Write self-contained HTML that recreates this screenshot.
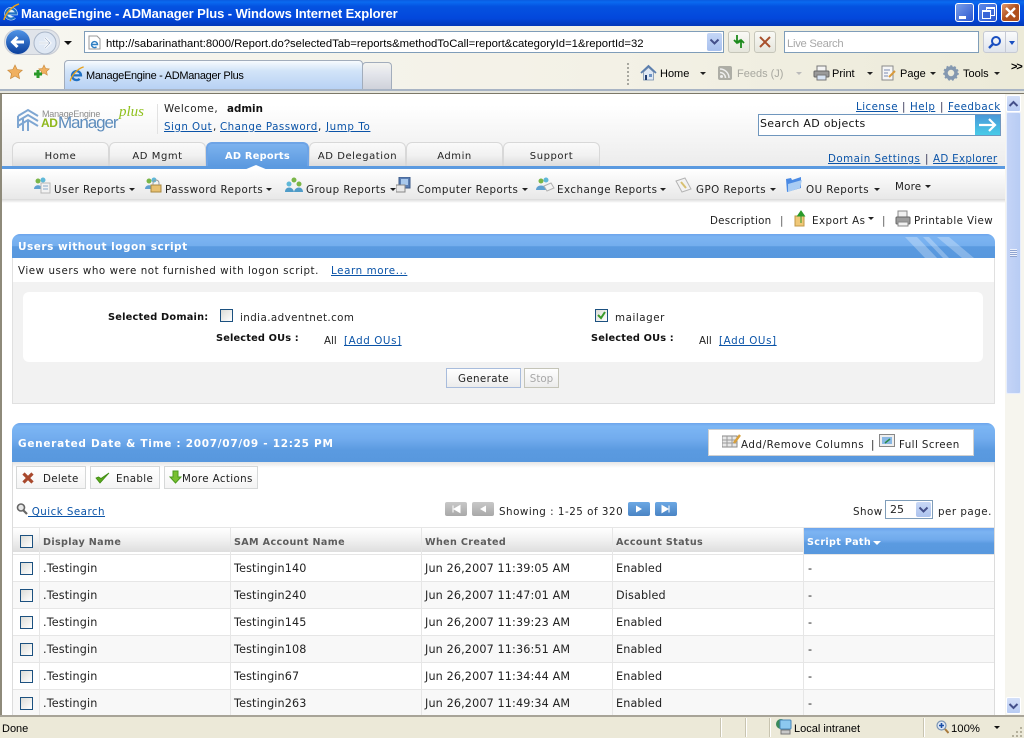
<!DOCTYPE html>
<html><head><meta charset="utf-8"><title>ManageEngine - ADManager Plus</title>
<style>
html,body{margin:0;padding:0}
body{width:1024px;height:738px;overflow:hidden;position:relative;background:#fff;font-family:"DejaVu Sans","Liberation Sans",sans-serif;font-size:10px;color:#222}
.a,.t,svg.i{position:absolute}
.t{white-space:nowrap;line-height:14px;margin-top:1px;letter-spacing:.46px}
.c{font-family:"Liberation Sans",sans-serif;font-size:12px;color:#000;letter-spacing:0}
a,.l{color:#0b54a8;text-decoration:underline}
.tab{position:absolute;top:142px;height:24px;box-sizing:border-box;border:1px solid #d8d8d8;border-bottom:0;border-radius:6px 6px 0 0;background:linear-gradient(#fafafa,#f1f1f1 55%,#dcdcdc);text-align:center;line-height:27px;color:#222;font-size:10px;letter-spacing:.55px}
.cb{position:absolute;width:11px;height:11px;border:1px solid #1c5180;background:linear-gradient(135deg,#dcdcd7,#fff)}
.btn{position:absolute;box-sizing:border-box;height:23px;border:1px solid #d6d8d8;background:linear-gradient(#fff,#f4f4f4)}
.row{position:absolute;left:13px;width:981px;height:26px;border-bottom:1px solid #e6e6e6}
.v{position:absolute;top:528px;width:1px;height:187px;background:#e6e6e6}
.cell{position:absolute;white-space:nowrap;font-size:11.2px;line-height:14px;color:#222;margin-top:1px;letter-spacing:.14px}
.th{position:absolute;top:535px;white-space:nowrap;font-weight:bold;color:#5c5c5c;font-size:9.6px;line-height:14px;margin-top:1px;letter-spacing:.36px}
.arr{position:absolute;width:0;height:0;border-left:3px solid transparent;border-right:3px solid transparent;border-top:3px solid #222}
.pg{position:absolute;top:502px;width:22px;height:14px;border-radius:2px}
</style></head><body>

<!-- title bar -->
<div class="a" style="left:0;top:0;width:1024px;height:26px;background:linear-gradient(#0a5ce0 0,#0a6af0 8%,#0452e0 25%,#0348dc 70%,#0338b8 100%)"></div>
<svg class="i" style="left:2px;top:3px" width="18" height="19" viewBox="0 0 18 19"><path d="M5 10.500h9a5 5 0 1 0-1.500 3.800" fill="#e4f0fa" stroke="#cfe6f8" stroke-width="3.400"/><path d="M5 10.500h9a5 5 0 1 0-1.500 3.800" fill="none" stroke="#1f70c4" stroke-width="2.200"/><path d="M2 17C3 11 10 3 17 1" fill="none" stroke="#e8a21c" stroke-width="1.500"/></svg>
<div class="t" style="left:21px;top:6px;font-family:'Liberation Sans',sans-serif;font-weight:bold;font-size:13px;color:#fff;letter-spacing:-.1px">ManageEngine - ADManager Plus - Windows Internet Explorer</div>
<div class="a" style="left:955px;top:3px;width:19px;height:19px;box-sizing:border-box;border:1px solid #fff;border-radius:3px;background:linear-gradient(135deg,#7a9ee8,#2a56d0)"><div class="a" style="left:3px;top:12px;width:7px;height:3px;background:#fff"></div></div>
<div class="a" style="left:978px;top:3px;width:19px;height:19px;box-sizing:border-box;border:1px solid #fff;border-radius:3px;background:linear-gradient(135deg,#5f8ae8,#2a56d0)"><div class="a" style="left:7px;top:3px;width:7px;height:6px;border:1px solid #fff;border-top-width:2px"></div><div class="a" style="left:3px;top:6px;width:7px;height:6px;border:1px solid #fff;border-top-width:2px;background:#3a66d8"></div></div>
<div class="a" style="left:1001px;top:3px;width:19px;height:19px;box-sizing:border-box;border:1px solid #fff;border-radius:3px;background:linear-gradient(135deg,#e09a70,#b0501c 50%)"><svg class="i" style="left:2px;top:2px" width="13" height="13"><path d="M2 2l9 9M11 2l-9 9" stroke="#fff" stroke-width="2.400"/></svg></div>

<!-- chrome -->
<div class="a" style="left:0;top:26px;width:1024px;height:66px;background:linear-gradient(90deg,#f7f6f0,#f3f1e6 60%,#ecead8)"></div>
<div class="a" style="left:4px;top:29px;width:56px;height:26px;border-radius:13px;background:#e0e4ea;border:1px solid #c8ccd4;box-sizing:border-box"></div>
<svg class="i" style="left:5px;top:29px" width="26" height="26" viewBox="0 0 26 26"><defs><linearGradient id="b1" x1="0" y1="0" x2="0" y2="1"><stop offset="0" stop-color="#4f93e6"/><stop offset="1" stop-color="#0b3f9c"/></linearGradient></defs><circle cx="13" cy="13" r="12" fill="url(#b1)"/><path d="M19 13H8M12.500 8L7.500 13l5 5" stroke="#fff" stroke-width="3" fill="none"/></svg>
<svg class="i" style="left:33px;top:31px" width="24" height="24" viewBox="0 0 24 24"><circle cx="12" cy="12" r="11" fill="#dfe8f4" stroke="#a9b6c8"/><path d="M6 12h11M12 7l5 5-5 5" stroke="#fff" stroke-width="2.600" fill="none"/><path d="M6 12h11M12 7l5 5-5 5" stroke="#98aac4" stroke-width=".6" fill="none"/></svg>
<div class="arr" style="left:64px;top:41px;border-left-width:4px;border-right-width:4px;border-top:4px solid #111"></div>
<div class="a" style="left:84px;top:31px;width:640px;height:22px;box-sizing:border-box;border:1px solid #7f9db9;background:#fff"></div>
<svg class="i" style="left:87px;top:35px" width="15" height="15" viewBox="0 0 15 15"><path d="M2 1h8l3 3v10H2z" fill="#fff" stroke="#999"/><path d="M5 9.500h5.500a3 3 0 1 0-1 2.300" fill="none" stroke="#2f7fc4" stroke-width="1.400"/></svg>
<div class="t c" style="left:106px;top:36px;font-size:11.3px;letter-spacing:0">http://sabarinathant:8000/Report.do?selectedTab=reports&amp;methodToCall=report&amp;categoryId=1&amp;reportId=32</div>
<div class="a" style="left:707px;top:33px;width:15px;height:18px;background:linear-gradient(#c4d6f6,#a8c0ee);border-radius:2px"></div>
<svg class="i" style="left:709px;top:38px" width="11" height="8"><path d="M1.500 1.500L5.500 5.500 9.500 1.500" stroke="#44508a" stroke-width="2" fill="none"/></svg>
<div class="a" style="left:728px;top:31px;width:22px;height:22px;box-sizing:border-box;border:1px solid #c6c6ba;border-radius:3px;background:linear-gradient(#fafaf6,#e6e6dc)"></div>
<svg class="i" style="left:731px;top:34px" width="16" height="16"><path d="M6 1v8M3 6l3 3 3-3" stroke="#1c8a1c" stroke-width="1.800" fill="none"/><path d="M10 14V7M7 9l3-3 3 3" stroke="#1c8a1c" stroke-width="1.800" fill="none"/></svg>
<div class="a" style="left:754px;top:31px;width:22px;height:22px;box-sizing:border-box;border:1px solid #c6c6ba;border-radius:3px;background:linear-gradient(#fafaf6,#e6e6dc)"></div>
<svg class="i" style="left:759px;top:36px" width="12" height="12"><path d="M1 1l10 10M11 1L1 11" stroke="#a8502c" stroke-width="2"/></svg>
<div class="a" style="left:784px;top:31px;width:195px;height:22px;box-sizing:border-box;border:1px solid #7f9db9;background:#fff"></div>
<div class="t c" style="left:787px;top:36px;font-size:11.3px;color:#a8a8a8;letter-spacing:-.3px">Live Search</div>
<div class="a" style="left:983px;top:31px;width:35px;height:22px;box-sizing:border-box;border:1px solid #c6cad4;border-radius:3px;background:linear-gradient(#fafbfc,#dfe4ec)"></div>
<div class="a" style="left:1005px;top:32px;width:1px;height:20px;background:#c6cad4"></div>
<svg class="i" style="left:987px;top:35px" width="15" height="15"><circle cx="9" cy="6" r="4" fill="none" stroke="#1a4fc0" stroke-width="2"/><path d="M6 9l-4 4" stroke="#1a4fc0" stroke-width="2.400"/></svg>
<div class="arr" style="left:1009px;top:41px;border-left-width:3px;border-right-width:3px;border-top:4px solid #1a4fc0"></div>

<svg class="i" style="left:7px;top:64px" width="16" height="16" viewBox="0 0 16 16"><path d="M8 1l2.200 4.600 5 .6-3.700 3.400 1 5L8 12l-4.500 2.600 1-5L.8 6.200l5-.6z" fill="#f0b060" stroke="#c98a3c" stroke-width=".7"/></svg>
<svg class="i" style="left:33px;top:64px" width="17" height="16" viewBox="0 0 17 16"><path d="M11 1l1.600 3.400 3.700.5-2.700 2.500.7 3.700L11 9l-3.300 1.900.7-3.700L5.700 4.900l3.700-.5z" fill="#f0b060" stroke="#c98a3c" stroke-width=".6"/><path d="M5 6v8M1 10h8" stroke="#2a9a2a" stroke-width="3"/></svg>
<div class="a" style="left:64px;top:60px;width:299px;height:29px;box-sizing:border-box;border:1px solid #a2adbc;border-bottom:0;border-radius:4px 4px 0 0;background:linear-gradient(#f8fbfe,#d2e4f8 35%,#b8d2f4)"></div>
<svg class="i" style="left:68px;top:66px" width="17" height="17" viewBox="0 0 18 19"><path d="M5 10.500h9a5 5 0 1 0-1.500 3.800" fill="none" stroke="#1f70c4" stroke-width="2.600"/><path d="M2 17C3 11 10 3 17 1" fill="none" stroke="#e8a21c" stroke-width="1.500"/></svg>
<div class="t c" style="left:86px;top:68px;font-size:11px;letter-spacing:-.3px">ManageEngine - ADManager Plus</div>
<div class="a" style="left:362px;top:62px;width:30px;height:27px;box-sizing:border-box;border:1px solid #a2adbc;border-bottom:0;border-radius:4px 4px 0 0;background:linear-gradient(#f4f4f0,#e4e6ec 40%,#cfd2da)"></div>
<div class="a" style="left:627px;top:63px;width:2px;height:22px;background:repeating-linear-gradient(#a8a8a0 0 2px,transparent 2px 4px)"></div>
<svg class="i" style="left:640px;top:64px" width="17" height="17" viewBox="0 0 17 17"><path d="M1 9l7.500-7L16 9" fill="none" stroke="#5a7eae" stroke-width="1.800"/><path d="M3.500 8v8h10V8l-5-4.500z" fill="#dfe8f4" stroke="#6c86a8" stroke-width=".7"/><path d="M5 11h2v5H5z" fill="#203c70"/><path d="M9 10h3v3H9z" fill="#6d93c4"/></svg>
<div class="t c" style="left:660px;top:66px;font-size:11px">Home</div>
<div class="arr" style="left:700px;top:72px"></div>
<svg class="i" style="left:718px;top:66px" width="14" height="14"><rect width="14" height="14" rx="2" fill="#aeaea6"/><circle cx="3.500" cy="10.500" r="1.500" fill="#eee"/><path d="M2 6.500a5.500 5.500 0 0 1 5.500 5.500M2 3a9 9 0 0 1 9 9" stroke="#eee" stroke-width="1.500" fill="none"/></svg>
<div class="t c" style="left:737px;top:66px;font-size:11px;color:#a8a8a0">Feeds (J)</div>
<div class="arr" style="left:796px;top:72px;border-top-color:#bbb"></div>
<svg class="i" style="left:813px;top:65px" width="17" height="16"><rect x="4" y="1" width="9" height="6" fill="#f4f4f4" stroke="#777"/><rect x="1" y="6" width="15" height="6" rx="1" fill="#9a9a9a" stroke="#666"/><rect x="4" y="10" width="9" height="5" fill="#d8e4f4" stroke="#777"/></svg>
<div class="t c" style="left:832px;top:66px;font-size:11px">Print</div>
<div class="arr" style="left:867px;top:72px"></div>
<svg class="i" style="left:881px;top:65px" width="16" height="16"><rect x="1" y="1" width="11" height="14" fill="#f6f6f6" stroke="#8a8a8a"/><path d="M3 5h6M3 8h4M3 11h4" stroke="#7a8ab0"/><path d="M8 12l6-6" stroke="#d89a3c" stroke-width="2"/></svg>
<div class="t c" style="left:900px;top:66px;font-size:11px">Page</div>
<div class="arr" style="left:930px;top:72px"></div>
<svg class="i" style="left:943px;top:65px" width="16" height="16"><circle cx="8" cy="8" r="5" fill="none" stroke="#8498b0" stroke-width="3.500"/><circle cx="8" cy="8" r="7" fill="none" stroke="#8498b0" stroke-width="1.600" stroke-dasharray="2 2"/></svg>
<div class="t c" style="left:963px;top:66px;font-size:11px">Tools</div>
<div class="arr" style="left:994px;top:72px"></div>
<div class="t c" style="left:1011px;top:59px;font-size:11px;font-weight:bold;letter-spacing:-1px">&gt;&gt;</div>
<div class="a" style="left:0;top:89px;width:1024px;height:2px;background:#a8b4c4"></div>
<div class="a" style="left:0;top:91px;width:1024px;height:2px;background:#e6e6de"></div>
<div class="a" style="left:0;top:93px;width:1024px;height:1px;background:#7c7868"></div>

<!-- page background -->
<div class="a" style="left:0;top:94px;width:2px;height:622px;background:#8e8a7a"></div>
<div class="a" style="left:2px;top:94px;width:1003px;height:75px;background:linear-gradient(#fff 0,#fff 15%,#ebebeb 100%)"></div>

<!-- logo -->
<svg class="i" style="left:16px;top:108px" width="24" height="25" viewBox="0 0 24 25"><g fill="none" stroke="#7ea6d2" stroke-width="2"><path d="M2 8l10-6 10 6M2 13l10-6 10 6M2 18l10-6 10 6"/><path d="M2 8v12M7 10v13M12 12v11"/></g></svg>
<div class="t" style="left:42px;top:106px;font-family:'Liberation Sans',sans-serif;font-size:9px;color:#8c8c8c;letter-spacing:-.2px">ManageEngine</div>
<div class="t" style="left:41px;top:115px;font-family:'Liberation Sans',sans-serif;font-weight:bold;font-size:12px;color:#8fb81c;letter-spacing:-.4px">AD</div>
<div class="t" style="left:58px;top:115px;font-family:'Liberation Sans',sans-serif;font-size:17px;color:#5d8cbc;letter-spacing:-1.100px">Manager</div>
<div class="t" style="left:119px;top:104px;font-family:'Liberation Serif',serif;font-style:italic;font-size:15px;color:#8fc01c;letter-spacing:0">plus</div>
<div class="a" style="left:157px;top:104px;width:1px;height:30px;background:#e2e2e2"></div>

<div class="t" style="left:164px;top:101px;font-size:10.3px;color:#222">Welcome,</div>
<div class="t" style="left:227px;top:101px;font-size:10.3px;font-weight:bold;color:#111;letter-spacing:0">admin</div>
<div class="t l" style="left:164px;top:119px;font-size:10.3px">Sign Out</div><div class="t" style="left:213px;top:119px;font-size:10.3px">,</div>
<div class="t l" style="left:220px;top:119px;font-size:10.3px">Change Password</div><div class="t" style="left:318px;top:119px;font-size:10.3px">,</div>
<div class="t l" style="left:326px;top:119px;font-size:10.3px;letter-spacing:.6px">Jump To</div>

<div class="t l" style="left:856px;top:99px;font-size:10.3px">License</div>
<div class="t" style="left:902px;top:99px;font-size:10.3px;color:#335">|</div>
<div class="t l" style="left:910px;top:99px;font-size:10.3px">Help</div>
<div class="t" style="left:940px;top:99px;font-size:10.3px;color:#335">|</div>
<div class="t l" style="left:948px;top:99px;font-size:10.3px">Feedback</div>

<div class="a" style="left:758px;top:114px;width:243px;height:22px;box-sizing:border-box;border:1px solid #6f96bd;background:#fff"></div>
<div class="t" style="left:760px;top:116px;font-size:11px;color:#111;letter-spacing:.3px">Search AD objects</div>
<div class="a" style="left:975px;top:115px;width:25px;height:20px;background:linear-gradient(#4a98d8,#48cce8)"></div>
<svg class="i" style="left:978px;top:117px" width="20" height="16"><path d="M1 8h16M11 2l6 6-6 6" stroke="#fff" stroke-width="2.200" fill="none"/></svg>

<!-- tabs -->
<div class="tab" style="left:12px;width:97px">Home</div>
<div class="tab" style="left:109px;width:97px">AD Mgmt</div>
<div class="tab" style="left:206px;width:103px;background:linear-gradient(#7cb2ee,#5c9ae0);border:2px solid #6ea4e6;border-bottom:0;color:#fff;font-weight:bold;line-height:25px;font-size:9.8px;letter-spacing:.25px">AD Reports</div>
<div class="tab" style="left:309px;width:97px">AD Delegation</div>
<div class="tab" style="left:406px;width:97px">Admin</div>
<div class="tab" style="left:503px;width:97px">Support</div>
<div class="t l" style="left:828px;top:151px;font-size:10.3px">Domain Settings</div>
<div class="t" style="left:925px;top:151px;font-size:10.3px;color:#335">|</div>
<div class="t l" style="left:933px;top:151px;font-size:10.3px;letter-spacing:.3px">AD Explorer</div>
<div class="a" style="left:2px;top:166px;width:1003px;height:3px;background:#5b9ae0"></div>

<!-- subnav -->
<div class="a" style="left:2px;top:169px;width:1003px;height:30px;background:linear-gradient(#fff,#f6f6f6 40%,#e8e8e8)"></div>
<div class="a" style="left:2px;top:199px;width:1003px;height:4px;background:linear-gradient(#d8d8d8,#fff)"></div>
<div class="a" style="left:244px;top:165px;width:0;height:0;border-left:12px solid transparent;border-right:12px solid transparent;border-bottom:5px solid #fff"></div>

<svg class="i" style="left:33px;top:177px" width="18" height="17"><circle cx="5" cy="4" r="2.500" fill="#7ab648"/><path d="M1 12c0-5 8-5 8 0z" fill="#5fa0d0"/><circle cx="10" cy="3" r="2.500" fill="#5fb8d8"/><rect x="8" y="6" width="9" height="10" fill="#f2f2f2" stroke="#b8b8b8"/><path d="M10 9h5M10 12h5" stroke="#8aa8c8"/></svg>
<div class="t" style="left:54px;top:182px;font-size:10.3px">User Reports</div><div class="arr" style="left:129px;top:188px"></div>
<svg class="i" style="left:144px;top:177px" width="18" height="17"><circle cx="5" cy="4" r="2.500" fill="#7ab648"/><path d="M1 12c0-5 8-5 8 0z" fill="#5fa0d0"/><circle cx="10" cy="3" r="2.500" fill="#5fb8d8"/><rect x="7" y="8" width="10" height="7" fill="#e8c070" stroke="#a88840"/><path d="M9 8V6a3 3 0 0 1 6 0v2" stroke="#999" fill="none"/></svg>
<div class="t" style="left:165px;top:182px;font-size:10.3px">Password Reports</div><div class="arr" style="left:266px;top:188px"></div>
<svg class="i" style="left:285px;top:177px" width="18" height="17"><circle cx="9" cy="3" r="2.500" fill="#7ab648"/><circle cx="4" cy="7" r="2.500" fill="#5fb8d8"/><circle cx="14" cy="7" r="2.500" fill="#7ab648"/><path d="M0 15c0-6 8-6 9 0 1-6 9-6 9 0z" fill="#4f9cc8"/></svg>
<div class="t" style="left:306px;top:182px;font-size:10.3px">Group Reports</div><div class="arr" style="left:390px;top:188px"></div>
<svg class="i" style="left:396px;top:177px" width="16" height="16"><rect x="3" y="0" width="11" height="11" fill="#5a7eb4" stroke="#3c5a88"/><rect x="5" y="2" width="7" height="6" fill="#a8c8ec"/><rect x="0" y="8" width="9" height="7" fill="#e8e8e8" stroke="#888"/></svg>
<div class="t" style="left:417px;top:182px;font-size:10.3px">Computer Reports</div><div class="arr" style="left:522px;top:188px"></div>
<svg class="i" style="left:535px;top:177px" width="20" height="17"><circle cx="6" cy="4" r="2.500" fill="#7ab648"/><path d="M1 13c0-6 10-6 10 0z" fill="#5fa0d0"/><circle cx="11" cy="3" r="2.500" fill="#5fb8d8"/><path d="M9 9l7-3 3 5-7 3z" fill="#f4f4f4" stroke="#b0b0b0"/></svg>
<div class="t" style="left:557px;top:182px;font-size:10.3px">Exchange Reports</div><div class="arr" style="left:660px;top:188px"></div>
<svg class="i" style="left:675px;top:177px" width="19" height="17"><path d="M1 4l9-3 6 11-9 3z" fill="#f2f2f2" stroke="#b4b4b4"/><path d="M6 5l5 6" stroke="#d8c070" stroke-width="2"/></svg>
<div class="t" style="left:696px;top:182px;font-size:10.3px">GPO Reports</div><div class="arr" style="left:770px;top:188px"></div>
<svg class="i" style="left:785px;top:176px" width="18" height="17"><path d="M1 3l5-1 1 2 9-3v11L2 16z" fill="#4a8ae4"/><path d="M3 8l14-4-2 8-12 4z" fill="#a8ccf4"/></svg>
<div class="t" style="left:806px;top:182px;font-size:10.3px">OU Reports</div><div class="arr" style="left:874px;top:188px"></div>
<div class="t" style="left:895px;top:179px;font-size:10.3px;letter-spacing:.2px">More</div><div class="arr" style="left:925px;top:185px"></div>

<!-- description row -->
<div class="t" style="left:710px;top:213px;font-size:10.3px;letter-spacing:.25px">Description</div>
<div class="t" style="left:780px;top:213px;font-size:10.3px;color:#555">|</div>
<svg class="i" style="left:793px;top:210px" width="16" height="17"><path d="M2 6h9v10H2z" fill="#f0c878" stroke="#c09848"/><path d="M8 13V4M4.500 6L8 1l3.500 5z" fill="#2a9a2a" stroke="#2a9a2a"/></svg>
<div class="t" style="left:812px;top:213px;font-size:10.3px;letter-spacing:.45px">Export As</div><div class="arr" style="left:868px;top:217px"></div>
<div class="t" style="left:882px;top:213px;font-size:10.3px;color:#555">|</div>
<svg class="i" style="left:895px;top:210px" width="16" height="17"><rect x="3" y="1" width="9" height="6" fill="#f0f0f0" stroke="#888"/><rect x="1" y="7" width="14" height="7" rx="1" fill="#9c9c9c" stroke="#666"/><rect x="3" y="12" width="10" height="4" fill="#f0f0f0" stroke="#888"/></svg>
<div class="t" style="left:914px;top:213px;font-size:10.3px;letter-spacing:.4px">Printable View</div>

<!-- panel 1 -->
<div class="a" style="left:12px;top:234px;width:983px;height:24px;border-radius:8px 8px 0 0;background:linear-gradient(#6ca4ec 0,#7cb4f2 12%,#74aeee 50%,#5a9ae0 52%,#5898de 100%)"></div>
<svg class="i" style="left:905px;top:237px" width="75" height="21"><path d="M0 0h12l20 21H20zM18 0h6l20 21h-6zM32 0h12l25 21H57z" fill="#fff" opacity=".28"/></svg>
<div class="t" style="left:18px;top:239px;font-size:10.5px;font-weight:bold;color:#fff;letter-spacing:.5px">Users without logon script</div>
<div class="a" style="left:12px;top:258px;width:981px;height:145px;border:1px solid #e0e0e0;border-top:0;background:#f2f2f2"></div>
<div class="a" style="left:13px;top:258px;width:981px;height:24px;background:#fff"></div>
<div class="t" style="left:18px;top:263px;font-size:10.3px;color:#222;letter-spacing:.55px">View users who were not furnished with logon script.</div>
<div class="t l" style="left:331px;top:263px;font-size:10.3px;letter-spacing:.6px">Learn more...</div>
<div class="a" style="left:23px;top:292px;width:960px;height:70px;border-radius:6px;background:#fff"></div>
<div class="t" style="left:108px;top:310px;font-size:9.8px;font-weight:bold;color:#111;letter-spacing:.2px">Selected Domain:</div>
<div class="cb" style="left:220px;top:309px"></div>
<div class="t" style="left:240px;top:310px;font-size:10.3px;color:#222;letter-spacing:.42px">india.adventnet.com</div>
<div class="cb" style="left:595px;top:309px"></div>
<svg class="i" style="left:596px;top:310px" width="11" height="11"><path d="M2 5l3 3 4-6" stroke="#3a9a2a" stroke-width="2" fill="none"/></svg>
<div class="t" style="left:615px;top:310px;font-size:10.3px;color:#222;letter-spacing:.55px">mailager</div>
<div class="t" style="left:216px;top:331px;font-size:9.8px;font-weight:bold;color:#111;letter-spacing:.15px">Selected OUs :</div>
<div class="t" style="left:324px;top:333px;font-size:10.3px;color:#222;letter-spacing:0">All</div>
<div class="t l" style="left:344px;top:333px;font-size:10.3px;letter-spacing:.6px">[Add OUs]</div>
<div class="t" style="left:591px;top:331px;font-size:9.8px;font-weight:bold;color:#111;letter-spacing:.15px">Selected OUs :</div>
<div class="t" style="left:699px;top:333px;font-size:10.3px;color:#222;letter-spacing:0">All</div>
<div class="t l" style="left:719px;top:333px;font-size:10.3px;letter-spacing:.6px">[Add OUs]</div>
<div class="a" style="left:446px;top:368px;width:75px;height:20px;box-sizing:border-box;border:1px solid #a8bcdc;background:linear-gradient(#fff,#ececec);text-align:center;line-height:21px;font-size:10.3px;color:#222;letter-spacing:.35px">Generate</div>
<div class="a" style="left:524px;top:368px;width:35px;height:20px;box-sizing:border-box;border:1px solid #c4c4b8;background:linear-gradient(#fff,#ececec);text-align:center;line-height:21px;font-size:10.3px;color:#a8a8a8">Stop</div>

<!-- panel 2 -->
<div class="a" style="left:12px;top:423px;width:983px;height:39px;border-radius:8px 8px 0 0;background:linear-gradient(#6ca4ec 0,#7cb6f4 8%,#72acee 40%,#5a9ae0 70%,#5898de 100%)"></div>
<div class="t" style="left:18px;top:436px;font-size:10.5px;font-weight:bold;color:#fff;letter-spacing:.71px">Generated Date &amp; Time : 2007/07/09 - 12:25 PM</div>
<div class="a" style="left:708px;top:429px;width:266px;height:27px;box-sizing:border-box;border:1px solid #d0d0d0;background:#fff"></div>
<svg class="i" style="left:722px;top:434px" width="20" height="15"><rect x="0" y="2" width="15" height="11" fill="#e8e8e8" stroke="#8a8a8a"/><path d="M5 2v11M10 2v11M0 6h15M0 9h15" stroke="#9a9a9a"/><path d="M12 9l6-8" stroke="#d8a03c" stroke-width="2.400"/></svg>
<div class="t" style="left:741px;top:437px;font-size:10.3px;color:#222;letter-spacing:.55px">Add/Remove Columns</div>
<div class="t" style="left:871px;top:437px;font-size:10.3px;color:#222">|</div>
<svg class="i" style="left:879px;top:434px" width="16" height="14"><rect x=".5" y=".5" width="15" height="12" fill="#eee" stroke="#888"/><rect x="3" y="3" width="10" height="7" fill="#8ab8e4"/><path d="M6 9l5-4" stroke="#2a8a4a" stroke-width="1.500"/></svg>
<div class="t" style="left:899px;top:437px;font-size:10.3px;color:#222;letter-spacing:.4px">Full Screen</div>

<div class="a" style="left:12px;top:462px;width:1px;height:253px;background:#dcdcdc"></div>
<div class="a" style="left:994px;top:462px;width:1px;height:253px;background:#dcdcdc"></div>
<div class="a" style="left:13px;top:462px;width:981px;height:6px;background:linear-gradient(#e6e6e6,#fff)"></div>

<div class="btn" style="left:16px;top:466px;width:70px"></div>
<svg class="i" style="left:22px;top:472px" width="12" height="12"><path d="M1.500 1.500l9 9M10.500 1.500l-9 9" stroke="#a8482c" stroke-width="3.200"/></svg>
<div class="t" style="left:43px;top:471px;font-size:10.3px;color:#222;letter-spacing:.3px">Delete</div>
<div class="btn" style="left:90px;top:466px;width:70px"></div>
<svg class="i" style="left:95px;top:472px" width="15" height="12"><path d="M1 6l4 5 9-10-8 5.500L3.500 5z" fill="#5aa81c" stroke="#3c8a10" stroke-width=".8"/></svg>
<div class="t" style="left:116px;top:471px;font-size:10.3px;color:#222;letter-spacing:.35px">Enable</div>
<div class="btn" style="left:164px;top:466px;width:94px"></div>
<svg class="i" style="left:169px;top:470px" width="13" height="14"><path d="M4 1h5v6h3l-5.500 6L1 7h3z" fill="#78c030" stroke="#4a9a1c"/></svg>
<div class="t" style="left:182px;top:471px;font-size:10.3px;color:#222;letter-spacing:.36px">More Actions</div>

<svg class="i" style="left:16px;top:503px" width="12" height="12"><circle cx="5" cy="4.500" r="3.500" fill="#e8e8e8" stroke="#666" stroke-width="1.600"/><path d="M7.500 7.500l3.500 3.500" stroke="#666" stroke-width="2.200"/></svg>
<div class="t l" style="left:28px;top:504px;font-size:10.3px">&nbsp;Quick Search</div>

<div class="pg" style="left:445px;background:linear-gradient(#c8c8c8,#a8a8a8)"><svg width="22" height="14"><path d="M8 3.500v7M15 3.500l-6 3.500 6 3.500z" fill="#fff" stroke="#fff"/></svg></div>
<div class="pg" style="left:472px;background:linear-gradient(#c8c8c8,#a8a8a8)"><svg width="22" height="14"><path d="M14 3.500l-6 3.500 6 3.500z" fill="#fff"/></svg></div>
<div class="t" style="left:499px;top:504px;font-size:10.3px;color:#222;letter-spacing:.52px">Showing : 1-25 of 320</div>
<div class="pg" style="left:628px;background:linear-gradient(#6ca8e4,#4a84c4)"><svg width="22" height="14"><path d="M8 3.500l6 3.500-6 3.500z" fill="#fff"/></svg></div>
<div class="pg" style="left:655px;background:linear-gradient(#6ca8e4,#4a84c4)"><svg width="22" height="14"><path d="M14 3.500v7M7 3.500l6 3.500-6 3.500z" fill="#fff" stroke="#fff"/></svg></div>
<div class="t" style="left:853px;top:504px;font-size:10.3px;color:#222">Show</div>
<div class="a" style="left:885px;top:500px;width:48px;height:19px;box-sizing:border-box;border:1px solid #7f9db9;background:#fff"></div>
<div class="t" style="left:890px;top:502px;font-size:11px;color:#222;letter-spacing:0">25</div>
<div class="a" style="left:916px;top:502px;width:15px;height:15px;background:linear-gradient(#c8d8f6,#aec4ee);border-radius:2px"></div>
<svg class="i" style="left:918px;top:506px" width="11" height="8"><path d="M1.500 1.500L5.500 5.500 9.500 1.500" stroke="#44508a" stroke-width="2" fill="none"/></svg>
<div class="t" style="left:938px;top:504px;font-size:10.3px;color:#222;letter-spacing:.5px">per page.</div>

<!-- table -->
<div class="a" style="left:13px;top:527px;width:981px;height:1px;background:#e6e6e6"></div>
<div class="a" style="left:13px;top:528px;width:981px;height:24px;background:linear-gradient(#fff,#f4f4f4 40%,#dedede)"></div>
<div class="a" style="left:13px;top:552px;width:981px;height:2px;background:#fff"></div>
<div class="a" style="left:13px;top:554px;width:981px;height:1px;background:#e6e6e6"></div>
<div class="a" style="left:804px;top:528px;width:190px;height:26px;background:linear-gradient(#6ca4ec,#7cb4f2 15%,#70aaec 45%,#5a9ae0 60%,#5898de)"></div>

<div class="row" style="top:555px;background:#fff"></div>
<div class="row" style="top:582px;background:#f8f8f8"></div>
<div class="row" style="top:609px;background:#fff"></div>
<div class="row" style="top:636px;background:#f8f8f8"></div>
<div class="row" style="top:663px;background:#fff"></div>
<div class="row" style="top:690px;background:#f8f8f8;height:25px;border:0"></div>

<div class="v" style="left:39px"></div><div class="v" style="left:230px"></div><div class="v" style="left:421px"></div><div class="v" style="left:612px"></div><div class="v" style="left:803px"></div>

<div class="cb" style="left:20px;top:535px"></div>
<div class="th" style="left:43px">Display Name</div>
<div class="th" style="left:234px">SAM Account Name</div>
<div class="th" style="left:425px">When Created</div>
<div class="th" style="left:616px">Account Status</div>
<div class="th" style="left:807px;color:#fff">Script Path</div>
<div class="arr" style="left:873px;top:541px;border-top:4px solid #fff;border-left-width:4px;border-right-width:4px"></div>

<div class="cb" style="left:20px;top:562px"></div><div class="cell" style="left:43px;top:561px">.Testingin</div><div class="cell" style="left:234px;top:561px">Testingin140</div><div class="cell" style="left:425px;top:561px">Jun 26,2007 11:39:05 AM</div><div class="cell" style="left:616px;top:561px">Enabled</div><div class="cell" style="left:808px;top:561px">-</div>
<div class="cb" style="left:20px;top:589px"></div><div class="cell" style="left:43px;top:588px">.Testingin</div><div class="cell" style="left:234px;top:588px">Testingin240</div><div class="cell" style="left:425px;top:588px">Jun 26,2007 11:47:01 AM</div><div class="cell" style="left:616px;top:588px">Disabled</div><div class="cell" style="left:808px;top:588px">-</div>
<div class="cb" style="left:20px;top:616px"></div><div class="cell" style="left:43px;top:615px">.Testingin</div><div class="cell" style="left:234px;top:615px">Testingin145</div><div class="cell" style="left:425px;top:615px">Jun 26,2007 11:39:23 AM</div><div class="cell" style="left:616px;top:615px">Enabled</div><div class="cell" style="left:808px;top:615px">-</div>
<div class="cb" style="left:20px;top:643px"></div><div class="cell" style="left:43px;top:642px">.Testingin</div><div class="cell" style="left:234px;top:642px">Testingin108</div><div class="cell" style="left:425px;top:642px">Jun 26,2007 11:36:51 AM</div><div class="cell" style="left:616px;top:642px">Enabled</div><div class="cell" style="left:808px;top:642px">-</div>
<div class="cb" style="left:20px;top:670px"></div><div class="cell" style="left:43px;top:669px">.Testingin</div><div class="cell" style="left:234px;top:669px">Testingin67</div><div class="cell" style="left:425px;top:669px">Jun 26,2007 11:34:44 AM</div><div class="cell" style="left:616px;top:669px">Enabled</div><div class="cell" style="left:808px;top:669px">-</div>
<div class="cb" style="left:20px;top:697px"></div><div class="cell" style="left:43px;top:696px">.Testingin</div><div class="cell" style="left:234px;top:696px">Testingin263</div><div class="cell" style="left:425px;top:696px">Jun 26,2007 11:49:34 AM</div><div class="cell" style="left:616px;top:696px">Enabled</div><div class="cell" style="left:808px;top:696px">-</div>

<!-- scrollbar -->
<div class="a" style="left:1005px;top:94px;width:19px;height:622px;background:#f6f5ee"></div>
<div class="a" style="left:1006px;top:95px;width:15px;height:17px;box-sizing:border-box;border:1px solid #fff;border-radius:2px;background:linear-gradient(#d4e0f8,#b8ccf4)"></div>
<svg class="i" style="left:1008px;top:100px" width="11" height="8"><path d="M1.500 6L5.500 2 9.500 6" stroke="#44508a" stroke-width="2" fill="none"/></svg>
<div class="a" style="left:1006px;top:112px;width:15px;height:282px;box-sizing:border-box;border:1px solid #e8eefc;border-radius:2px;background:linear-gradient(90deg,#c4d4f6,#b8ccf4)"></div>
<div class="a" style="left:1010px;top:249px;width:7px;height:8px;background:repeating-linear-gradient(#eef2fc 0 1px,#8fa4d0 1px 2px)"></div>
<div class="a" style="left:1006px;top:697px;width:15px;height:17px;box-sizing:border-box;border:1px solid #fff;border-radius:2px;background:linear-gradient(#d4e0f8,#b8ccf4)"></div>
<svg class="i" style="left:1008px;top:702px" width="11" height="8"><path d="M1.500 2L5.500 6 9.500 2" stroke="#44508a" stroke-width="2" fill="none"/></svg>

<!-- status bar -->
<div class="a" style="left:0;top:715px;width:1024px;height:2px;background:#a8a498"></div>
<div class="a" style="left:0;top:717px;width:1024px;height:21px;background:#ece9d8"></div>
<div class="t c" style="left:2px;top:721px;font-size:11px">Done</div>
<div class="a" style="left:721px;top:718px;width:1px;height:19px;background:#fff;box-shadow:-1px 0 #c8c4b0"></div>
<div class="a" style="left:746px;top:718px;width:1px;height:19px;background:#fff;box-shadow:-1px 0 #c8c4b0"></div>
<div class="a" style="left:770px;top:718px;width:1px;height:19px;background:#fff;box-shadow:-1px 0 #c8c4b0"></div>
<div class="a" style="left:924px;top:718px;width:1px;height:19px;background:#fff;box-shadow:-1px 0 #c8c4b0"></div>
<svg class="i" style="left:775px;top:718px" width="17" height="17"><circle cx="6" cy="6" r="5" fill="#3a8a5a"/><rect x="5" y="2" width="11" height="9" rx="1" fill="#8cc8f0" stroke="#4a88b8"/><rect x="6" y="12" width="9" height="4" fill="#c8c8c8" stroke="#777"/></svg>
<div class="t c" style="left:794px;top:721px;font-size:11px">Local intranet</div>
<svg class="i" style="left:936px;top:720px" width="13" height="14"><circle cx="5.500" cy="5.500" r="4.500" fill="#dfe8f4" stroke="#7a94b4" stroke-width="1.200"/><path d="M3 5.500h5M5.500 3v5" stroke="#1a4fa8" stroke-width="1.600"/><path d="M9 9l3.500 4" stroke="#a87a3c" stroke-width="2"/></svg>
<div class="t c" style="left:951px;top:721px;font-size:11.3px">100%</div>
<div class="arr" style="left:994px;top:726px;border-left-width:3px;border-right-width:3px;border-top:3px solid #111"></div>
<svg class="i" style="left:1012px;top:726px" width="12" height="12" fill="#b4b09c"><rect x="8" y="1" width="2" height="2"/><rect x="4" y="5" width="2" height="2"/><rect x="8" y="5" width="2" height="2"/><rect x="0" y="9" width="2" height="2"/><rect x="4" y="9" width="2" height="2"/><rect x="8" y="9" width="2" height="2"/></svg>
</body></html>
